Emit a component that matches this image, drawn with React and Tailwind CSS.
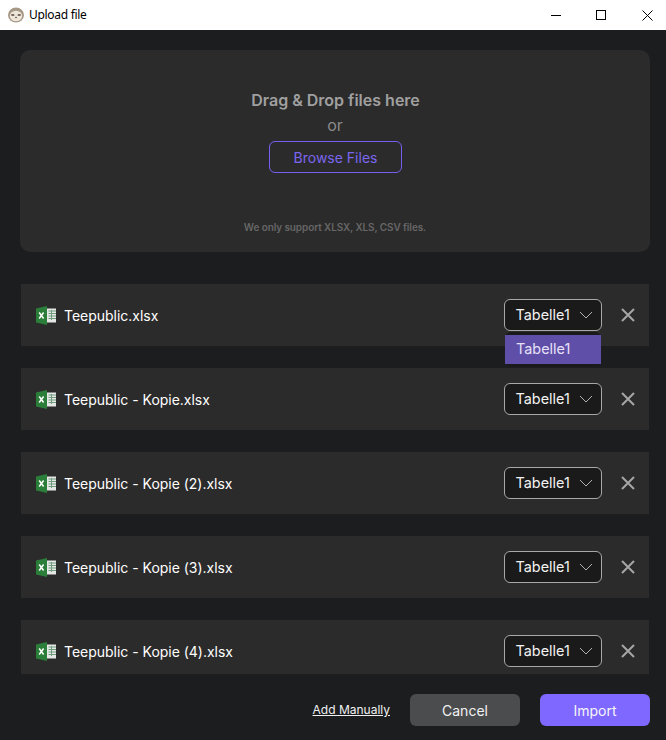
import React from "react";

const names = ["Teepublic.xlsx", "Teepublic - Kopie.xlsx", "Teepublic - Kopie (2).xlsx", "Teepublic - Kopie (3).xlsx", "Teepublic - Kopie (4).xlsx"];

function Excel() {
  return (
    <svg width="20" height="19" viewBox="0 0 20 19" className="shrink-0">
      <rect x="10" y="2.5" width="10" height="14" fill="#e4e7e5" />
      <path d="M12.5 5h7.5M12.5 7.5h7.5M12.5 10h7.5M12.5 12.5h7.5M15.5 4v10" stroke="#6f9c7c" strokeWidth="1" fill="none" />
      <path d="M0 2.5 L11 0 V19 L0 16.5 Z" fill="#2b7d3a" />
      <path d="M3.2 6.5 L7.6 12.5 M7.6 6.5 L3.2 12.5" stroke="#ffffff" strokeWidth="1.5" fill="none" />
    </svg>
  );
}

function Row({ name, open }) {
  return (
    <div className="relative h-[62px] shrink-0 bg-[#2b2b2b] flex items-center pl-[15px] pr-[14px]">
      <Excel />
      <span className="ml-[8px] pt-[1px] text-[14px] tracking-[-0.02px] text-white flex-1">{name}</span>
      <div className="w-[98px] h-[32px] rounded-[6px] border border-[#a8a8a8] bg-[#1a1a1a] flex items-center justify-between pl-[10.5px] pr-[7px] text-[14.4px] text-[#f2f2f2]">
        <span>Tabelle1</span>
        <svg width="16" height="16" viewBox="0 0 16 16" fill="none" stroke="#b0b0b0" strokeWidth="1">
          <path d="M2 5 L8 11 L14 5" />
        </svg>
      </div>
      <svg width="14" height="14" viewBox="0 0 14 14" fill="none" stroke="#a6a6a6" strokeWidth="2" className="ml-[19px]">
        <path d="M1 1 L13 13 M13 1 L1 13" />
      </svg>
      {open && (
        <div className="absolute z-10 left-[484px] top-[48px] w-[96px] py-[3px] rounded-[6px] bg-[#1a1a1a]">
          <div className="h-[29px] bg-[#5f4fa8] flex items-center pl-[11px] pb-[2px] text-[14.4px] text-[#e6e1f7]">Tabelle1</div>
        </div>
      )}
    </div>
  );
}

export default function App() {
  return (
    <div className="w-[666px] h-[740px] overflow-hidden bg-[#1c1d1f]">
      <div className="w-[670px] h-[740px] flex flex-col font-['Inter',sans-serif]">
        <div className="h-[30px] shrink-0 bg-white flex items-center">
          <svg width="16" height="16" viewBox="0 0 16 16" className="ml-[8px]">
            <ellipse cx="8" cy="8" rx="8" ry="7.5" fill="#a59886" />
            <ellipse cx="8" cy="9" rx="6.2" ry="5.2" fill="#eee6d8" />
            <ellipse cx="4.8" cy="8" rx="1.8" ry="1.1" fill="#6d6155" />
            <ellipse cx="11.2" cy="8" rx="1.8" ry="1.1" fill="#6d6155" />
            <ellipse cx="8" cy="10.5" rx="1.2" ry="0.8" fill="#7d7164" />
          </svg>
          <span className="ml-[5px] text-[12px] tracking-[-0.3px] text-black font-['Noto_Sans',sans-serif]">Upload file</span>
          <div className="ml-auto flex items-center h-full">
            <div className="w-[45px] h-full flex items-center justify-center">
              <div className="w-[10px] h-px bg-black" />
            </div>
            <div className="w-[46px] h-full flex items-center justify-center">
              <div className="w-[10px] h-[10px] border border-black" />
            </div>
            <div className="w-[46px] h-full flex items-center justify-center">
              <svg width="11" height="11" viewBox="0 0 11 11" fill="none" stroke="#000" strokeWidth="1"><path d="M0.5 0.5 L10.5 10.5 M10.5 0.5 L0.5 10.5" /></svg>
            </div>
          </div>
        </div>

        <div className="mt-[20px] mx-[20px] h-[202px] shrink-0 rounded-[10px] bg-[#2b2b2b] flex flex-col items-center pt-[39px]">
          <div className="pl-[1px] text-[16px] leading-[22px] font-semibold text-[#a0a0a0]">Drag &amp; Drop files here</div>
          <div className="mt-[3px] text-[16px] leading-[22px] text-[#8a8a8a]">or</div>
          <div className="mt-[5px] w-[133px] h-[32px] rounded-[6px] border border-[#7460f0] flex items-center justify-center pt-[1px] pl-[1px] text-[14px] text-[#7b66f0]">Browse Files</div>
          <div className="mt-[47px] text-[10px] leading-[14px] tracking-[-0.1px] font-semibold text-[#666666]">We only support XLSX, XLS, CSV files.</div>
        </div>

        <div className="mt-[32px] mx-[21px] h-[390px] shrink-0 overflow-hidden flex flex-col gap-[22px]">
          {names.map((n, i) => <Row key={n} name={n} open={i === 0} />)}
        </div>

        <div className="flex items-center justify-end pr-[20px] mt-[20px]">
          <span className="text-[12px] text-[#f0f0f0] underline mr-[20px]">Add Manually</span>
          <div className="w-[110px] h-[32px] rounded-[6px] bg-[#4b4c4e] flex items-center justify-center text-[14px] text-[#f2f2f2] mr-[20px]">Cancel</div>
          <div className="w-[110px] h-[32px] rounded-[6px] bg-[#7f68ff] flex items-center justify-center text-[14px] text-[#f6f6f6]">Import</div>
        </div>
      </div>
    </div>
  );
}
